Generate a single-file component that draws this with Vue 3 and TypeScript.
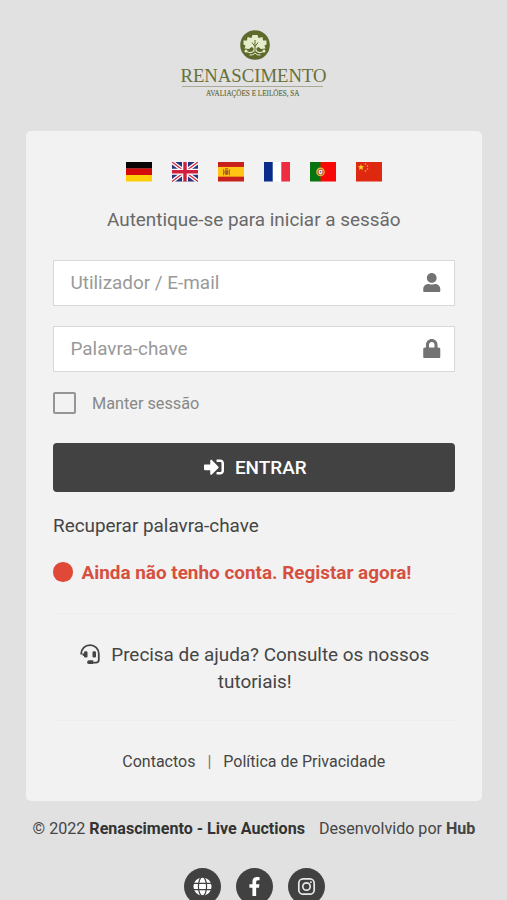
<script setup lang="ts">
import { ref } from 'vue'

const user = ref('')
const password = ref('')
const remember = ref(false)
const languages = ['de', 'gb', 'es', 'fr', 'pt', 'cn']
</script>

<template>
  <main class="page">
    <svg class="logo" viewBox="0 0 150 70" role="img" aria-label="Renascimento">
      <circle cx="76" cy="15" r="14.800" fill="#5c6b2c" />
      <g transform="translate(1.500 0)" fill="#e6ebcb">
        <path d="M72 5h5l1 3 4-1 .5 3.500h3.500v4l-2 1 1 3-4.500.5-2.500-2-2 1v3.500h-3V18l-2-1-2.500 2-4.500-.5 1-3-2-1v-4h3.500l.5-3.500 4 1z" />
        <path d="M66 21.500q5 2.500 7.500-1h2q2.500 3.500 7.500 1" fill="none" stroke="#e6ebcb" stroke-width="1.200" />
        <circle cx="65.500" cy="21" r="1.500" /><circle cx="83.500" cy="21" r="1.500" />
        <path d="M69 25q4 .5 5.500-2 1.500 2.500 5.500 2" fill="none" stroke="#e6ebcb" stroke-width="1" />
        <path fill="none" stroke="#5c6b2c" stroke-width="1" d="M74.500 10V22M71.500 12.500l3 4 3-4" />
      </g>
      <text class="logo-name" x="1.500" y="52" textLength="146" lengthAdjust="spacingAndGlyphs">RENASCIMENTO</text>
      <path stroke="#aaa995" stroke-width="1" d="M3 56.500h141" />
      <text class="logo-sub" x="27" y="65.500" textLength="93.500" lengthAdjust="spacingAndGlyphs">AVALIAÇÕES E LEILÕES, SA</text>
    </svg>

    <section class="card">
      <nav class="flags">
        <svg v-for="code in languages" :key="code" class="flag" viewBox="0 0 26 19" preserveAspectRatio="none">
          <template v-if="code === 'de'">
            <path fill="#080404" d="M0 0h26v6.500H0z" /><path fill="#d60a0a" d="M0 6.300h26v6.500H0z" /><path fill="#ffce08" d="M0 12.700h26V19H0z" />
          </template>
          <template v-else-if="code === 'gb'">
            <path fill="#29337a" d="M0 0h26v19H0z" />
            <path stroke="#fff" stroke-width="3.800" d="M0 0l26 19M26 0L0 19" />
            <path stroke="#d22643" stroke-width="1.300" d="M0 0l26 19M26 0L0 19" />
            <path stroke="#fff" stroke-width="6" d="M13 0v19M0 9.500h26" />
            <path stroke="#cf1f3c" stroke-width="3.400" d="M13 0v19M0 9.500h26" />
          </template>
          <template v-else-if="code === 'es'">
            <path fill="#c8201c" d="M0 0h26v19H0z" /><path fill="#ffc414" d="M0 4.800h26v9.500H0z" />
            <path fill="#a86a2c" d="M5 7h1v6H5zm6 0h1v6h-1z" /><path fill="#b65423" d="M6.500 8h4v3.500q-2 2.500-4 0zM7 6h3v1.300H7z" />
            <circle cx="8.500" cy="9.700" r="1" fill="#776c55" />
          </template>
          <template v-else-if="code === 'fr'">
            <path fill="#082b8c" d="M0 0h9v19H0z" /><path fill="#fff" d="M8.700 0h8.600v19H8.700z" /><path fill="#f02c42" d="M17.300 0H26v19h-8.700z" />
          </template>
          <template v-else-if="code === 'pt'">
            <path fill="#087410" d="M0 0h11v19H0z" /><path fill="#fa0808" d="M10.500 0H26v19H10.500z" />
            <circle cx="10.500" cy="9.700" r="4.300" fill="#d8b83d" /><circle cx="10.500" cy="9.700" r="3" fill="#cf4935" />
            <path fill="#f4e9dd" d="M8.700 7.700h3.600v3q-1.800 3-3.600 0z" /><circle cx="10.500" cy="9.600" r=".8" fill="#50628c" />
          </template>
          <template v-else>
            <path fill="#de2910" d="M0 0h26v19H0z" />
            <path fill="#ffda20" d="M5 2l.8 2.200h2.400l-1.900 1.400.7 2.300L5 6.500 3 7.900l.7-2.300-1.900-1.400h2.400z" />
            <g fill="#f6b21b"><circle cx="9.500" cy="2" r=".8" /><circle cx="11.500" cy="4" r=".8" /><circle cx="11.500" cy="6.800" r=".8" /><circle cx="9.500" cy="8.800" r=".8" /></g>
          </template>
        </svg>
      </nav>
      <p class="intro"><span>Autentique-se para iniciar a sessão</span></p>

      <form @submit.prevent>
        <label class="field">
          <input v-model="user" type="text" placeholder="Utilizador / E-mail" />
          <svg viewBox="0 0 448 512"><path d="M224 256c70.700 0 128-57.300 128-128S294.700 0 224 0 96 57.300 96 128s57.300 128 128 128zm89.600 32h-16.700c-22.200 10.200-46.900 16-72.900 16s-50.600-5.800-72.900-16h-16.700C60.200 288 0 348.200 0 422.400V464c0 26.500 21.500 48 48 48h352c26.500 0 48-21.500 48-48v-41.600c0-74.200-60.200-134.400-134.400-134.400z" /></svg>
        </label>
        <label class="field">
          <input v-model="password" type="password" placeholder="Palavra-chave" />
          <svg viewBox="0 0 448 512"><path d="M400 224h-24v-72C376 68.200 307.800 0 224 0S72 68.200 72 152v72H48c-26.500 0-48 21.500-48 48v192c0 26.500 21.500 48 48 48h352c26.500 0 48-21.500 48-48V272c0-26.500-21.500-48-48-48zm-104 0H152v-72c0-39.700 32.300-72 72-72s72 32.300 72 72v72z" /></svg>
        </label>
        <label class="remember">
          <input v-model="remember" type="checkbox" />
          <span>Manter sessão</span>
        </label>
        <button class="enter" type="submit">
          <svg viewBox="0 0 512 512"><path d="M416 448h-84c-6.600 0-12-5.400-12-12v-40c0-6.600 5.400-12 12-12h84c17.700 0 32-14.300 32-32V160c0-17.700-14.300-32-32-32h-84c-6.600 0-12-5.400-12-12V76c0-6.600 5.400-12 12-12h84c53 0 96 43 96 96v192c0 53-43 96-96 96zm-47-201L201 79c-15-15-41-4.500-41 17v96H24c-13.300 0-24 10.700-24 24v96c0 13.300 10.700 24 24 24h136v96c0 21.500 26 32 41 17l168-168c9.300-9.400 9.300-24.600 0-34z" /></svg>
          <span>ENTRAR</span>
        </button>
      </form>

      <a class="recover">Recuperar palavra-chave</a>
      <a class="register"><i class="dot"></i><span>Ainda não tenho conta. Registar agora!</span></a>

      <div class="help">
        <svg viewBox="0 0 20 20">
          <path class="line" d="M1.200 10.500V9.800C1.200 4.700 5 1.200 10 1.200s8.800 3.500 8.800 8.600v6q0 2.900-2.900 2.900H11" />
          <rect x="4" y="7.200" width="3.500" height="6.300" rx="1.300" /><rect x="12.500" y="7.200" width="3.500" height="6.300" rx="1.300" />
          <path d="M2 9.500h2.500v2.500H3z" />
          <path d="M9 16.300h4.200V20H9a1.850 1.850 0 010-3.700z" />
        </svg><span>Precisa de ajuda? Consulte os nossos tutoriais!</span>
      </div>

      <nav class="legal"><a>Contactos</a><span class="bar">|</span><a>Política de Privacidade</a></nav>
    </section>

    <footer>
      <p class="credits"><span>© 2022 <b>Renascimento - Live Auctions</b></span><span class="maker">Desenvolvido por <b>Hub</b></span></p>
      <div class="social">
        <a><svg viewBox="0 0 20 20" fill="none">
          <circle cx="10" cy="10" r="9.500" fill="#fff" /><g stroke="#414141" stroke-width="1.300"><ellipse cx="10" cy="10" rx="4.300" ry="10" /><path d="M0 6.800h20M0 13.200h20" /></g>
        </svg></a>
        <a><svg viewBox="0 0 320 512" fill="#fff"><path d="M279.140 288l14.220-92.660h-88.910v-60.130c0-25.350 12.420-50.060 52.240-50.060h40.420V6.260S260.430 0 225.360 0c-73.220 0-121.080 44.380-121.080 124.720v70.620H22.890V288h81.390v224h100.170V288z" /></svg></a>
        <a><svg viewBox="0 0 20 20" fill="none" stroke="#e8e8e8" stroke-width="1.800"><rect x="1.900" y="1.900" width="16.200" height="16.200" rx="4.500" /><circle cx="10" cy="10" r="3.900" /><circle cx="14.600" cy="5.400" r="1" fill="#e8e8e8" stroke="none" /></svg></a>
      </div>
    </footer>
  </main>
</template>

<style>
body {
  background: #e1e1e1;
  overflow: hidden;
}
</style>

<style scoped>
* {
  box-sizing: border-box;
}
.page {
  height: 900px;
  overflow: hidden;
  padding: 30px 26px 0;
  display: flex;
  flex-direction: column;
  font-family: Roboto, sans-serif;
  font-size: 18.900px;
  color: #454545;
}
.logo {
  width: 150px;
  height: 70px;
  flex: none;
  align-self: center;
  margin-bottom: 31px;
}
.logo-name {
  font: 18px "Liberation Serif", serif;
  fill: #66703a;
}
.logo-sub {
  font: 8px "Liberation Serif", serif;
  fill: #626a3b;
  stroke: #626a3b;
  stroke-width: 0.15px;
}
.card {
  width: 455.500px;
  height: 669.500px;
  flex: none;
  padding: 31px 27px 0;
  border-radius: 5px;
  background: #f2f2f2;
  display: flex;
  flex-direction: column;
}
.flags {
  display: flex;
  justify-content: center;
  gap: 20px;
}
.flag {
  width: 26px;
  height: 19.500px;
}
.intro {
  margin: 24px 0 27px;
  line-height: 27px;
  text-align: center;
  color: #696969;
}
.field {
  display: flex;
  align-items: center;
  height: 46px;
  margin-bottom: 20px;
  padding: 0 13px 0 16.500px;
  border: 1.500px solid #d8d9dc;
  background: #fff;
}
.field input {
  flex: 1;
  min-width: 0;
  padding: 0;
  border: 0;
  outline: 0;
  background: none;
  font: inherit;
}
.field input::placeholder {
  color: #999;
  opacity: 1;
}
.field svg {
  width: 17.500px;
  height: 19.500px;
  fill: #737373;
}
.remember {
  display: flex;
  align-items: center;
  height: 22px;
  gap: 16.500px;
  font-size: 16.250px;
  color: #888;
}
.remember span {
  padding-top: 1px;
}
.remember input {
  appearance: none;
  width: 22.500px;
  height: 22px;
  margin: 0;
  border: 2px solid #959595;
  border-radius: 2px;
}
.enter {
  display: flex;
  align-items: center;
  justify-content: center;
  gap: 11px;
  width: 100%;
  height: 49px;
  margin-top: 29px;
  padding: 0 0 0 3px;
  border: 0;
  border-radius: 4px;
  background: #424242;
  color: #fff;
  font: 500 18.900px Roboto, sans-serif;
}
.enter svg {
  width: 20px;
  height: 20px;
  fill: #fff;
}
.recover {
  margin-top: 20px;
  line-height: 27px;
}
.register {
  display: flex;
  align-items: center;
  gap: 9px;
  margin-top: 20px;
  line-height: 27px;
  font-weight: 700;
  color: #d5503f;
}
.dot {
  width: 19.500px;
  height: 19.500px;
  border-radius: 50%;
  background: #df4937;
}
.help {
  margin-top: 27px;
  padding: 27px 19px 25px 21px;
  border-top: 1px solid #ededed;
  border-bottom: 1px solid #ededed;
  line-height: 27px;
  text-align: center;
}
.help svg {
  width: 20px;
  height: 20px;
  margin-right: 11px;
  vertical-align: -3px;
  fill: #444;
}
.help .line {
  fill: none;
  stroke: #444;
  stroke-width: 1.800;
}
.legal {
  display: flex;
  justify-content: center;
  gap: 12px;
  margin-top: 29px;
  line-height: 24px;
  font-size: 16px;
}
.bar {
  color: #777;
}
.credits {
  display: flex;
  justify-content: center;
  gap: 14px;
  margin: 16px -10.500px 0 -9.500px;
  line-height: 24px;
  font-size: 16.080px;
  white-space: nowrap;
}
.credits b {
  color: #333;
}
.maker b {
  color: #454545;
}
.social {
  display: flex;
  justify-content: center;
  gap: 15px;
  margin-top: 27px;
  padding-left: 1px;
}
.social a {
  display: flex;
  align-items: center;
  justify-content: center;
  width: 37px;
  height: 37px;
  border-radius: 50%;
  background: #414141;
}
.social svg {
  width: 19px;
  height: 19px;
}
</style>
